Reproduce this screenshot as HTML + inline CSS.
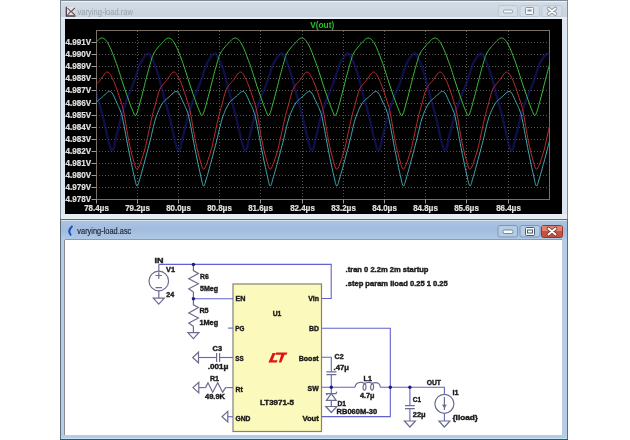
<!DOCTYPE html>
<html><head><meta charset="utf-8"><style>
html,body{margin:0;padding:0;width:630px;height:440px;overflow:hidden;background:#fff;font-family:"Liberation Sans",sans-serif;}
</style></head><body>
<svg width="630" height="440" viewBox="0 0 630 440" style="position:absolute;left:0;top:0;will-change:transform">
<defs>
<linearGradient id="tb1" x1="0" y1="0" x2="0" y2="1"><stop offset="0" stop-color="#d3dce5"/><stop offset="1" stop-color="#c9d3dd"/></linearGradient>
<linearGradient id="tb2" x1="0" y1="0" x2="0" y2="1"><stop offset="0" stop-color="#aac2e2"/><stop offset="0.5" stop-color="#a2bcde"/><stop offset="1" stop-color="#aec8e6"/></linearGradient>
<clipPath id="plotclip"><rect x="96.5" y="30.5" width="453" height="169.5"/></clipPath>
</defs>
<rect x="0" y="0" width="630" height="440" fill="#ffffff"/>
<rect x="60.5" y="0.5" width="507" height="219" fill="#d6dfe8" stroke="#7f8c98" stroke-width="1"/>
<rect x="61" y="1" width="506" height="1" fill="#eef3f7"/>
<rect x="61" y="2" width="506" height="15" fill="url(#tb1)"/>
<rect x="61" y="17" width="506" height="2" fill="#e6edf3"/>
<rect x="61" y="19" width="4" height="200" fill="#dde6ee"/>
<rect x="562" y="19" width="5" height="200" fill="#dde6ee"/>
<rect x="61" y="214" width="506" height="5" fill="#e6eef4"/>
<rect x="65" y="19" width="497" height="195" fill="#000000"/>
<text x="77.5" y="15" font-family="Liberation Sans" font-size="8.6" fill="#98a2ac" textLength="55.5" lengthAdjust="spacingAndGlyphs">varying-load.raw</text>
<rect x="65.5" y="7" width="9.5" height="9" fill="#e8dde4"/>
<g fill="none" stroke="#4a4048" stroke-width="1.3"><path d="M66.3 6.8 V16 H75.5"/></g>
<g fill="none" stroke="#5a5058" stroke-width="1.1"><path d="M67.5 8 L71 11.8 L74.8 8 M67.5 15 L71 11.2 L74.8 15"/></g>
<rect x="498.5" y="5.5" width="19" height="11" rx="2" fill="#d4dee8" stroke="#bcc8d4" stroke-width="1"/><rect x="503.5" y="10" width="9" height="3" rx="1" fill="#f4f6f8" stroke="#8a949c" stroke-width="0.8"/>
<rect x="520.0" y="5.5" width="19.5" height="11" rx="2" fill="#d4dee8" stroke="#bcc8d4" stroke-width="1"/><rect x="525.5" y="7.5" width="8" height="7" rx="1" fill="#f4f6f8" stroke="#8a949c" stroke-width="1"/><rect x="527.5" y="9.5" width="4" height="2" fill="#8a949c"/>
<rect x="542.0" y="5.5" width="20" height="11" rx="2" fill="#d4dee8" stroke="#bcc8d4" stroke-width="1"/><path d="M548.5 8.5 L555.5 14 M555.5 8.5 L548.5 14" stroke="#8a949c" stroke-width="3.6" stroke-linecap="round"/><path d="M548.5 8.5 L555.5 14 M555.5 8.5 L548.5 14" stroke="#f8fafc" stroke-width="2" stroke-linecap="round"/>
<path d="M96 42.5 H549 M96 54.5 H549 M96 66.5 H549 M96 78.5 H549 M96 90.5 H549 M96 103.5 H549 M96 115.5 H549 M96 127.5 H549 M96 139.5 H549 M96 151.5 H549 M96 163.5 H549 M96 175.5 H549 M96 187.5 H549 M137.5 31 V199 M178.5 31 V199 M219.5 31 V199 M260.5 31 V199 M302.5 31 V199 M343.5 31 V199 M384.5 31 V199 M425.5 31 V199 M466.5 31 V199 M508.5 31 V199" stroke="#555555" stroke-width="1" stroke-dasharray="1 2" fill="none"/>
<rect x="96.5" y="30.5" width="453" height="169" fill="none" stroke="#7a7068" stroke-width="1"/>
<path d="M91.5 42.5 H96.5 M91.5 54.5 H96.5 M91.5 66.5 H96.5 M91.5 78.5 H96.5 M91.5 90.5 H96.5 M91.5 103.5 H96.5 M91.5 115.5 H96.5 M91.5 127.5 H96.5 M91.5 139.5 H96.5 M91.5 151.5 H96.5 M91.5 163.5 H96.5 M91.5 175.5 H96.5 M91.5 187.5 H96.5 M91.5 199.5 H96.5 M96.5 199.5 V203.5 M137.5 199.5 V203.5 M178.5 199.5 V203.5 M219.5 199.5 V203.5 M260.5 199.5 V203.5 M302.5 199.5 V203.5 M343.5 199.5 V203.5 M384.5 199.5 V203.5 M425.5 199.5 V203.5 M466.5 199.5 V203.5 M508.5 199.5 V203.5" stroke="#9a9a9a" stroke-width="1" fill="none"/>
<text x="91.2" y="44.8" text-anchor="end" font-family="Liberation Sans" font-weight="bold" font-size="8.4" fill="#e0e0e0" stroke="#e0e0e0" stroke-width="0.2" textLength="25.6" lengthAdjust="spacingAndGlyphs">4.991V</text>
<text x="91.2" y="56.8" text-anchor="end" font-family="Liberation Sans" font-weight="bold" font-size="8.4" fill="#e0e0e0" stroke="#e0e0e0" stroke-width="0.2" textLength="25.6" lengthAdjust="spacingAndGlyphs">4.990V</text>
<text x="91.2" y="68.8" text-anchor="end" font-family="Liberation Sans" font-weight="bold" font-size="8.4" fill="#e0e0e0" stroke="#e0e0e0" stroke-width="0.2" textLength="25.6" lengthAdjust="spacingAndGlyphs">4.989V</text>
<text x="91.2" y="80.8" text-anchor="end" font-family="Liberation Sans" font-weight="bold" font-size="8.4" fill="#e0e0e0" stroke="#e0e0e0" stroke-width="0.2" textLength="25.6" lengthAdjust="spacingAndGlyphs">4.988V</text>
<text x="91.2" y="92.8" text-anchor="end" font-family="Liberation Sans" font-weight="bold" font-size="8.4" fill="#e0e0e0" stroke="#e0e0e0" stroke-width="0.2" textLength="25.6" lengthAdjust="spacingAndGlyphs">4.987V</text>
<text x="91.2" y="105.8" text-anchor="end" font-family="Liberation Sans" font-weight="bold" font-size="8.4" fill="#e0e0e0" stroke="#e0e0e0" stroke-width="0.2" textLength="25.6" lengthAdjust="spacingAndGlyphs">4.986V</text>
<text x="91.2" y="117.8" text-anchor="end" font-family="Liberation Sans" font-weight="bold" font-size="8.4" fill="#e0e0e0" stroke="#e0e0e0" stroke-width="0.2" textLength="25.6" lengthAdjust="spacingAndGlyphs">4.985V</text>
<text x="91.2" y="129.8" text-anchor="end" font-family="Liberation Sans" font-weight="bold" font-size="8.4" fill="#e0e0e0" stroke="#e0e0e0" stroke-width="0.2" textLength="25.6" lengthAdjust="spacingAndGlyphs">4.984V</text>
<text x="91.2" y="141.8" text-anchor="end" font-family="Liberation Sans" font-weight="bold" font-size="8.4" fill="#e0e0e0" stroke="#e0e0e0" stroke-width="0.2" textLength="25.6" lengthAdjust="spacingAndGlyphs">4.983V</text>
<text x="91.2" y="153.8" text-anchor="end" font-family="Liberation Sans" font-weight="bold" font-size="8.4" fill="#e0e0e0" stroke="#e0e0e0" stroke-width="0.2" textLength="25.6" lengthAdjust="spacingAndGlyphs">4.982V</text>
<text x="91.2" y="165.8" text-anchor="end" font-family="Liberation Sans" font-weight="bold" font-size="8.4" fill="#e0e0e0" stroke="#e0e0e0" stroke-width="0.2" textLength="25.6" lengthAdjust="spacingAndGlyphs">4.981V</text>
<text x="91.2" y="177.8" text-anchor="end" font-family="Liberation Sans" font-weight="bold" font-size="8.4" fill="#e0e0e0" stroke="#e0e0e0" stroke-width="0.2" textLength="25.6" lengthAdjust="spacingAndGlyphs">4.980V</text>
<text x="91.2" y="189.8" text-anchor="end" font-family="Liberation Sans" font-weight="bold" font-size="8.4" fill="#e0e0e0" stroke="#e0e0e0" stroke-width="0.2" textLength="25.6" lengthAdjust="spacingAndGlyphs">4.979V</text>
<text x="91.2" y="201.8" text-anchor="end" font-family="Liberation Sans" font-weight="bold" font-size="8.4" fill="#e0e0e0" stroke="#e0e0e0" stroke-width="0.2" textLength="25.6" lengthAdjust="spacingAndGlyphs">4.978V</text>
<text x="96.5" y="211.3" text-anchor="middle" font-family="Liberation Sans" font-weight="bold" font-size="8.2" fill="#e0e0e0" stroke="#e0e0e0" stroke-width="0.2" textLength="24.7" lengthAdjust="spacingAndGlyphs">78.4μs</text>
<text x="137.5" y="211.3" text-anchor="middle" font-family="Liberation Sans" font-weight="bold" font-size="8.2" fill="#e0e0e0" stroke="#e0e0e0" stroke-width="0.2" textLength="24.7" lengthAdjust="spacingAndGlyphs">79.2μs</text>
<text x="178.5" y="211.3" text-anchor="middle" font-family="Liberation Sans" font-weight="bold" font-size="8.2" fill="#e0e0e0" stroke="#e0e0e0" stroke-width="0.2" textLength="24.7" lengthAdjust="spacingAndGlyphs">80.0μs</text>
<text x="219.5" y="211.3" text-anchor="middle" font-family="Liberation Sans" font-weight="bold" font-size="8.2" fill="#e0e0e0" stroke="#e0e0e0" stroke-width="0.2" textLength="24.7" lengthAdjust="spacingAndGlyphs">80.8μs</text>
<text x="260.5" y="211.3" text-anchor="middle" font-family="Liberation Sans" font-weight="bold" font-size="8.2" fill="#e0e0e0" stroke="#e0e0e0" stroke-width="0.2" textLength="24.7" lengthAdjust="spacingAndGlyphs">81.6μs</text>
<text x="302.5" y="211.3" text-anchor="middle" font-family="Liberation Sans" font-weight="bold" font-size="8.2" fill="#e0e0e0" stroke="#e0e0e0" stroke-width="0.2" textLength="24.7" lengthAdjust="spacingAndGlyphs">82.4μs</text>
<text x="343.5" y="211.3" text-anchor="middle" font-family="Liberation Sans" font-weight="bold" font-size="8.2" fill="#e0e0e0" stroke="#e0e0e0" stroke-width="0.2" textLength="24.7" lengthAdjust="spacingAndGlyphs">83.2μs</text>
<text x="384.5" y="211.3" text-anchor="middle" font-family="Liberation Sans" font-weight="bold" font-size="8.2" fill="#e0e0e0" stroke="#e0e0e0" stroke-width="0.2" textLength="24.7" lengthAdjust="spacingAndGlyphs">84.0μs</text>
<text x="425.5" y="211.3" text-anchor="middle" font-family="Liberation Sans" font-weight="bold" font-size="8.2" fill="#e0e0e0" stroke="#e0e0e0" stroke-width="0.2" textLength="24.7" lengthAdjust="spacingAndGlyphs">84.8μs</text>
<text x="466.5" y="211.3" text-anchor="middle" font-family="Liberation Sans" font-weight="bold" font-size="8.2" fill="#e0e0e0" stroke="#e0e0e0" stroke-width="0.2" textLength="24.7" lengthAdjust="spacingAndGlyphs">85.6μs</text>
<text x="508.5" y="211.3" text-anchor="middle" font-family="Liberation Sans" font-weight="bold" font-size="8.2" fill="#e0e0e0" stroke="#e0e0e0" stroke-width="0.2" textLength="24.7" lengthAdjust="spacingAndGlyphs">86.4μs</text>
<text x="322.2" y="28.3" text-anchor="middle" font-family="Liberation Sans" font-weight="bold" font-size="9.5" fill="#22c422" textLength="24" lengthAdjust="spacingAndGlyphs">V(out)</text>
<g clip-path="url(#plotclip)" fill="none" stroke-linejoin="round">
<polyline points="94.9,87.4 95.8,90.8 96.6,94.1 97.4,97.0 98.1,99.5 98.7,101.7 99.3,103.6 99.8,105.4 100.3,107.4 100.9,109.5 101.6,112.0 102.4,115.0 103.4,118.9 104.5,123.7 105.7,129.0 106.9,134.5 108.2,139.7 109.4,144.3 110.5,147.9 111.4,150.0 112.2,150.6 113.0,150.1 113.6,148.6 114.2,146.4 114.7,143.8 115.3,141.1 115.8,138.4 116.4,136.0 117.0,133.8 117.6,131.4 118.3,128.9 118.9,126.2 119.5,123.6 120.1,121.0 120.7,118.4 121.4,116.0 122.1,113.6 122.9,111.2 123.6,108.8 124.4,106.5 125.2,104.2 126.0,102.0 126.7,99.9 127.4,98.0 128.1,96.2 128.8,94.5 129.4,93.0 130.1,91.5 130.7,90.1 131.3,88.7 131.9,87.4 132.4,86.0 132.9,84.7 133.4,83.4 133.8,82.2 134.3,81.0 134.7,79.8 135.1,78.6 135.5,77.3 136.0,76.0 136.5,74.6 136.9,73.1 137.4,71.5 137.8,69.9 138.3,68.4 138.8,66.8 139.4,65.4 140.0,64.0 140.7,62.7 141.4,61.3 142.2,60.0 143.0,58.8 143.8,57.6 144.6,56.5 145.3,55.7 146.0,55.0 146.6,54.5 147.1,54.0 147.5,53.6 147.9,53.4 148.4,53.4 148.8,53.7 149.4,54.2 150.0,55.0 150.7,56.2 151.5,57.6 152.4,59.4 153.3,61.4 154.2,63.6 155.2,65.9 156.1,68.4 157.0,71.0 157.9,73.8 158.8,77.0 159.7,80.4 160.6,83.9 161.5,87.4 162.4,90.8 163.2,94.1 164.0,97.0 164.7,99.5 165.3,101.7 165.8,103.6 166.4,105.4 166.9,107.4 167.5,109.5 168.2,112.0 169.0,115.0 170.0,118.9 171.1,123.7 172.3,129.0 173.5,134.5 174.7,139.7 175.9,144.3 177.0,147.9 178.0,150.0 178.8,150.6 179.5,150.1 180.2,148.6 180.8,146.4 181.3,143.8 181.8,141.1 182.4,138.4 183.0,136.0 183.6,133.8 184.2,131.4 184.8,128.9 185.4,126.2 186.1,123.6 186.7,121.0 187.3,118.4 188.0,116.0 188.7,113.6 189.5,111.2 190.2,108.8 191.0,106.5 191.8,104.2 192.5,102.0 193.3,99.9 194.0,98.0 194.7,96.2 195.4,94.5 196.0,93.0 196.7,91.5 197.3,90.1 197.9,88.7 198.4,87.4 199.0,86.0 199.5,84.7 200.0,83.4 200.4,82.2 200.9,81.0 201.3,79.8 201.7,78.6 202.1,77.3 202.6,76.0 203.0,74.6 203.5,73.1 204.0,71.5 204.4,69.9 204.9,68.4 205.4,66.8 206.0,65.4 206.6,64.0 207.2,62.7 208.0,61.3 208.8,60.0 209.6,58.8 210.4,57.6 211.2,56.5 211.9,55.7 212.6,55.0 213.2,54.5 213.7,54.0 214.1,53.6 214.5,53.4 214.9,53.4 215.4,53.7 216.0,54.2 216.6,55.0 217.3,56.2 218.1,57.6 219.0,59.4 219.9,61.4 220.8,63.6 221.8,65.9 222.7,68.4 223.6,71.0 224.5,73.8 225.4,77.0 226.3,80.4 227.2,83.9 228.1,87.4 229.0,90.8 229.8,94.1 230.6,97.0 231.3,99.5 231.9,101.7 232.4,103.6 233.0,105.4 233.5,107.4 234.1,109.5 234.8,112.0 235.6,115.0 236.5,118.9 237.6,123.7 238.8,129.0 240.1,134.5 241.3,139.7 242.5,144.3 243.6,147.9 244.6,150.0 245.4,150.6 246.1,150.1 246.7,148.6 247.3,146.4 247.9,143.8 248.4,141.1 249.0,138.4 249.6,136.0 250.2,133.8 250.8,131.4 251.4,128.9 252.0,126.2 252.6,123.6 253.3,121.0 253.9,118.4 254.6,116.0 255.3,113.6 256.0,111.2 256.8,108.8 257.6,106.5 258.4,104.2 259.1,102.0 259.9,99.9 260.6,98.0 261.3,96.2 261.9,94.5 262.6,93.0 263.2,91.5 263.9,90.1 264.5,88.7 265.0,87.4 265.6,86.0 266.1,84.7 266.6,83.4 267.0,82.2 267.4,81.0 267.8,79.8 268.3,78.6 268.7,77.3 269.2,76.0 269.6,74.6 270.1,73.1 270.5,71.5 271.0,69.9 271.5,68.4 272.0,66.8 272.6,65.4 273.2,64.0 273.8,62.7 274.6,61.3 275.4,60.0 276.2,58.8 277.0,57.6 277.8,56.5 278.5,55.7 279.2,55.0 279.7,54.5 280.2,54.0 280.7,53.6 281.1,53.4 281.5,53.4 282.0,53.7 282.5,54.2 283.2,55.0 283.9,56.2 284.7,57.6 285.6,59.4 286.5,61.4 287.4,63.6 288.3,65.9 289.3,68.4 290.2,71.0 291.0,73.8 292.0,77.0 292.9,80.4 293.8,83.9 294.7,87.4 295.6,90.8 296.4,94.1 297.2,97.0 297.9,99.5 298.5,101.7 299.0,103.6 299.5,105.4 300.1,107.4 300.7,109.5 301.4,112.0 302.2,115.0 303.1,118.9 304.2,123.7 305.4,129.0 306.7,134.5 307.9,139.7 309.1,144.3 310.2,147.9 311.2,150.0 312.0,150.6 312.7,150.1 313.3,148.6 313.9,146.4 314.5,143.8 315.0,141.1 315.6,138.4 316.2,136.0 316.8,133.8 317.4,131.4 318.0,128.9 318.6,126.2 319.2,123.6 319.8,121.0 320.5,118.4 321.2,116.0 321.9,113.6 322.6,111.2 323.4,108.8 324.2,106.5 324.9,104.2 325.7,102.0 326.5,99.9 327.2,98.0 327.8,96.2 328.5,94.5 329.2,93.0 329.8,91.5 330.4,90.1 331.0,88.7 331.6,87.4 332.2,86.0 332.7,84.7 333.1,83.4 333.6,82.2 334.0,81.0 334.4,79.8 334.8,78.6 335.3,77.3 335.7,76.0 336.2,74.6 336.7,73.1 337.1,71.5 337.6,69.9 338.1,68.4 338.6,66.8 339.1,65.4 339.7,64.0 340.4,62.7 341.1,61.3 341.9,60.0 342.7,58.8 343.5,57.6 344.3,56.5 345.1,55.7 345.7,55.0 346.3,54.5 346.8,54.0 347.3,53.6 347.7,53.4 348.1,53.4 348.6,53.7 349.1,54.2 349.7,55.0 350.5,56.2 351.3,57.6 352.1,59.4 353.1,61.4 354.0,63.6 354.9,65.9 355.8,68.4 356.7,71.0 357.6,73.8 358.5,77.0 359.5,80.4 360.4,83.9 361.3,87.4 362.1,90.8 363.0,94.1 363.7,97.0 364.4,99.5 365.0,101.7 365.6,103.6 366.1,105.4 366.7,107.4 367.3,109.5 367.9,112.0 368.7,115.0 369.7,118.9 370.8,123.7 372.0,129.0 373.2,134.5 374.5,139.7 375.7,144.3 376.8,147.9 377.7,150.0 378.6,150.6 379.3,150.1 379.9,148.6 380.5,146.4 381.0,143.8 381.6,141.1 382.1,138.4 382.7,136.0 383.4,133.8 384.0,131.4 384.6,128.9 385.2,126.2 385.8,123.6 386.4,121.0 387.1,118.4 387.7,116.0 388.4,113.6 389.2,111.2 390.0,108.8 390.7,106.5 391.5,104.2 392.3,102.0 393.0,99.9 393.7,98.0 394.4,96.2 395.1,94.5 395.8,93.0 396.4,91.5 397.0,90.1 397.6,88.7 398.2,87.4 398.7,86.0 399.3,84.7 399.7,83.4 400.2,82.2 400.6,81.0 401.0,79.8 401.4,78.6 401.9,77.3 402.3,76.0 402.8,74.6 403.2,73.1 403.7,71.5 404.2,69.9 404.7,68.4 405.2,66.8 405.7,65.4 406.3,64.0 407.0,62.7 407.7,61.3 408.5,60.0 409.3,58.8 410.1,57.6 410.9,56.5 411.7,55.7 412.3,55.0 412.9,54.5 413.4,54.0 413.8,53.6 414.3,53.4 414.7,53.4 415.2,53.7 415.7,54.2 416.3,55.0 417.1,56.2 417.9,57.6 418.7,59.4 419.6,61.4 420.6,63.6 421.5,65.9 422.4,68.4 423.3,71.0 424.2,73.8 425.1,77.0 426.0,80.4 426.9,83.9 427.8,87.4 428.7,90.8 429.5,94.1 430.3,97.0 431.0,99.5 431.6,101.7 432.2,103.6 432.7,105.4 433.2,107.4 433.8,109.5 434.5,112.0 435.3,115.0 436.3,118.9 437.4,123.7 438.6,129.0 439.8,134.5 441.1,139.7 442.3,144.3 443.4,147.9 444.3,150.0 445.1,150.6 445.9,150.1 446.5,148.6 447.1,146.4 447.6,143.8 448.2,141.1 448.7,138.4 449.3,136.0 449.9,133.8 450.5,131.4 451.2,128.9 451.8,126.2 452.4,123.6 453.0,121.0 453.6,118.4 454.3,116.0 455.0,113.6 455.8,111.2 456.5,108.8 457.3,106.5 458.1,104.2 458.9,102.0 459.6,99.9 460.3,98.0 461.0,96.2 461.7,94.5 462.3,93.0 463.0,91.5 463.6,90.1 464.2,88.7 464.8,87.4 465.3,86.0 465.8,84.7 466.3,83.4 466.7,82.2 467.2,81.0 467.6,79.8 468.0,78.6 468.4,77.3 468.9,76.0 469.4,74.6 469.8,73.1 470.3,71.5 470.7,69.9 471.2,68.4 471.7,66.8 472.3,65.4 472.9,64.0 473.6,62.7 474.3,61.3 475.1,60.0 475.9,58.8 476.7,57.6 477.5,56.5 478.2,55.7 478.9,55.0 479.5,54.5 480.0,54.0 480.4,53.6 480.8,53.4 481.3,53.4 481.7,53.7 482.3,54.2 482.9,55.0 483.6,56.2 484.4,57.6 485.3,59.4 486.2,61.4 487.1,63.6 488.1,65.9 489.0,68.4 489.9,71.0 490.8,73.8 491.7,77.0 492.6,80.4 493.5,83.9 494.4,87.4 495.3,90.8 496.1,94.1 496.9,97.0 497.6,99.5 498.2,101.7 498.7,103.6 499.3,105.4 499.8,107.4 500.4,109.5 501.1,112.0 501.9,115.0 502.9,118.9 504.0,123.7 505.2,129.0 506.4,134.5 507.6,139.7 508.8,144.3 509.9,147.9 510.9,150.0 511.7,150.6 512.4,150.1 513.1,148.6 513.6,146.4 514.2,143.8 514.7,141.1 515.3,138.4 515.9,136.0 516.5,133.8 517.1,131.4 517.7,128.9 518.3,126.2 519.0,123.6 519.6,121.0 520.2,118.4 520.9,116.0 521.6,113.6 522.4,111.2 523.1,108.8 523.9,106.5 524.7,104.2 525.4,102.0 526.2,99.9 526.9,98.0 527.6,96.2 528.3,94.5 528.9,93.0 529.6,91.5 530.2,90.1 530.8,88.7 531.3,87.4 531.9,86.0 532.4,84.7 532.9,83.4 533.3,82.2 533.8,81.0 534.2,79.8 534.6,78.6 535.0,77.3 535.5,76.0 535.9,74.6 536.4,73.1 536.9,71.5 537.3,69.9 537.8,68.4 538.3,66.8 538.9,65.4 539.5,64.0 540.1,62.7 540.9,61.3 541.7,60.0 542.5,58.8 543.3,57.6 544.1,56.5 544.8,55.7 545.5,55.0 546.1,54.5 546.6,54.0 547.0,53.6 547.4,53.4 547.8,53.4 548.3,53.7 548.9,54.2 549.5,55.0 550.2,56.2 551.0,57.6" stroke="#1c1c84" stroke-width="2.4" stroke-opacity="0.55"/>
<polyline points="94.6,105.5 95.4,104.0 96.3,102.7 97.1,101.7 98.0,100.7 98.8,99.9 99.7,99.2 100.6,98.5 101.5,97.7 102.4,97.0 103.4,96.1 104.4,95.1 105.4,94.1 106.5,93.2 107.5,92.3 108.5,91.7 109.5,91.4 110.4,91.5 111.3,92.1 112.1,93.0 112.9,94.3 113.7,95.8 114.4,97.5 115.1,99.1 115.8,100.6 116.4,102.0 117.0,103.2 117.6,104.4 118.1,105.5 118.6,106.6 119.1,107.7 119.6,108.8 120.0,109.9 120.4,111.0 120.8,112.0 121.1,112.7 121.3,113.4 121.6,114.1 121.8,115.0 122.1,116.2 122.5,117.8 122.9,120.0 123.5,122.9 124.2,126.4 124.9,130.3 125.7,134.6 126.5,138.9 127.3,143.2 128.1,147.3 128.8,151.0 129.5,154.4 130.2,157.8 130.9,161.1 131.5,164.2 132.2,167.3 132.8,170.1 133.4,172.7 133.9,175.0 134.4,177.1 134.8,179.1 135.2,180.9 135.6,182.5 135.9,183.8 136.3,184.9 136.6,185.6 137.0,186.0 137.4,186.0 137.7,185.5 138.1,184.7 138.4,183.7 138.8,182.4 139.1,181.0 139.6,179.5 140.0,178.0 140.5,176.4 141.0,174.7 141.5,172.8 142.1,170.9 142.7,168.8 143.2,166.6 143.9,164.3 144.5,162.0 145.2,159.5 145.9,156.9 146.6,154.1 147.4,151.3 148.1,148.4 148.9,145.6 149.6,142.7 150.3,140.0 151.0,137.3 151.6,134.5 152.2,131.8 152.9,129.1 153.5,126.4 154.1,123.8 154.8,121.3 155.5,119.0 156.2,116.8 157.0,114.6 157.8,112.6 158.6,110.6 159.5,108.8 160.3,107.0 161.2,105.5 162.0,104.0 162.8,102.7 163.7,101.7 164.5,100.7 165.4,99.9 166.3,99.2 167.2,98.5 168.1,97.7 169.0,97.0 170.0,96.1 171.0,95.1 172.0,94.1 173.1,93.2 174.1,92.3 175.1,91.7 176.1,91.4 177.0,91.5 177.9,92.1 178.7,93.0 179.5,94.3 180.2,95.8 181.0,97.5 181.7,99.1 182.4,100.6 183.0,102.0 183.6,103.2 184.2,104.4 184.7,105.5 185.2,106.6 185.7,107.7 186.2,108.8 186.6,109.9 187.0,111.0 187.4,112.0 187.7,112.7 187.9,113.4 188.1,114.1 188.4,115.0 188.7,116.2 189.0,117.8 189.5,120.0 190.1,122.9 190.8,126.4 191.5,130.3 192.3,134.6 193.1,138.9 193.9,143.2 194.7,147.3 195.4,151.0 196.1,154.4 196.8,157.8 197.5,161.1 198.1,164.2 198.8,167.3 199.4,170.1 200.0,172.7 200.5,175.0 201.0,177.1 201.4,179.1 201.8,180.9 202.2,182.5 202.5,183.8 202.9,184.9 203.2,185.6 203.6,186.0 203.9,186.0 204.3,185.5 204.6,184.7 205.0,183.7 205.3,182.4 205.7,181.0 206.1,179.5 206.6,178.0 207.1,176.4 207.6,174.7 208.1,172.8 208.7,170.9 209.2,168.8 209.8,166.6 210.4,164.3 211.1,162.0 211.7,159.5 212.5,156.9 213.2,154.1 213.9,151.3 214.7,148.4 215.4,145.6 216.2,142.7 216.9,140.0 217.5,137.3 218.2,134.5 218.8,131.8 219.4,129.1 220.1,126.4 220.7,123.8 221.4,121.3 222.1,119.0 222.8,116.8 223.6,114.6 224.4,112.6 225.2,110.6 226.0,108.8 226.9,107.0 227.7,105.5 228.6,104.0 229.4,102.7 230.3,101.7 231.1,100.7 232.0,99.9 232.9,99.2 233.7,98.5 234.7,97.7 235.6,97.0 236.5,96.1 237.6,95.1 238.6,94.1 239.6,93.2 240.7,92.3 241.7,91.7 242.7,91.4 243.6,91.5 244.4,92.1 245.3,93.0 246.1,94.3 246.8,95.8 247.6,97.5 248.3,99.1 248.9,100.6 249.6,102.0 250.2,103.2 250.8,104.4 251.3,105.5 251.8,106.6 252.3,107.7 252.7,108.8 253.2,109.9 253.6,111.0 253.9,112.0 254.2,112.7 254.5,113.4 254.7,114.1 255.0,115.0 255.3,116.2 255.6,117.8 256.1,120.0 256.7,122.9 257.3,126.4 258.1,130.3 258.9,134.6 259.7,138.9 260.5,143.2 261.3,147.3 262.0,151.0 262.7,154.4 263.4,157.8 264.0,161.1 264.7,164.2 265.4,167.3 266.0,170.1 266.5,172.7 267.1,175.0 267.6,177.1 268.0,179.1 268.4,180.9 268.8,182.5 269.1,183.8 269.4,184.9 269.8,185.6 270.2,186.0 270.5,186.0 270.9,185.5 271.2,184.7 271.6,183.7 271.9,182.4 272.3,181.0 272.7,179.5 273.2,178.0 273.6,176.4 274.1,174.7 274.7,172.8 275.2,170.9 275.8,168.8 276.4,166.6 277.0,164.3 277.7,162.0 278.3,159.5 279.0,156.9 279.8,154.1 280.5,151.3 281.3,148.4 282.0,145.6 282.8,142.7 283.5,140.0 284.1,137.3 284.8,134.5 285.4,131.8 286.0,129.1 286.6,126.4 287.3,123.8 288.0,121.3 288.7,119.0 289.4,116.8 290.2,114.6 291.0,112.6 291.8,110.6 292.6,108.8 293.5,107.0 294.3,105.5 295.2,104.0 296.0,102.7 296.9,101.7 297.7,100.7 298.6,99.9 299.4,99.2 300.3,98.5 301.2,97.7 302.2,97.0 303.1,96.1 304.1,95.1 305.2,94.1 306.2,93.2 307.3,92.3 308.3,91.7 309.2,91.4 310.2,91.5 311.0,92.1 311.8,93.0 312.6,94.3 313.4,95.8 314.1,97.5 314.8,99.1 315.5,100.6 316.2,102.0 316.8,103.2 317.3,104.4 317.9,105.5 318.4,106.6 318.9,107.7 319.3,108.8 319.7,109.9 320.2,111.0 320.5,112.0 320.8,112.7 321.1,113.4 321.3,114.1 321.5,115.0 321.8,116.2 322.2,117.8 322.7,120.0 323.2,122.9 323.9,126.4 324.7,130.3 325.4,134.6 326.3,138.9 327.1,143.2 327.8,147.3 328.6,151.0 329.2,154.4 329.9,157.8 330.6,161.1 331.3,164.2 331.9,167.3 332.5,170.1 333.1,172.7 333.7,175.0 334.1,177.1 334.6,179.1 335.0,180.9 335.3,182.5 335.7,183.8 336.0,184.9 336.4,185.6 336.7,186.0 337.1,186.0 337.5,185.5 337.8,184.7 338.2,183.7 338.5,182.4 338.9,181.0 339.3,179.5 339.7,178.0 340.2,176.4 340.7,174.7 341.3,172.8 341.8,170.9 342.4,168.8 343.0,166.6 343.6,164.3 344.2,162.0 344.9,159.5 345.6,156.9 346.3,154.1 347.1,151.3 347.9,148.4 348.6,145.6 349.3,142.7 350.0,140.0 350.7,137.3 351.4,134.5 352.0,131.8 352.6,129.1 353.2,126.4 353.9,123.8 354.5,121.3 355.2,119.0 356.0,116.8 356.8,114.6 357.6,112.6 358.4,110.6 359.2,108.8 360.0,107.0 360.9,105.5 361.7,104.0 362.6,102.7 363.4,101.7 364.3,100.7 365.1,99.9 366.0,99.2 366.9,98.5 367.8,97.7 368.7,97.0 369.7,96.1 370.7,95.1 371.8,94.1 372.8,93.2 373.8,92.3 374.9,91.7 375.8,91.4 376.7,91.5 377.6,92.1 378.4,93.0 379.2,94.3 380.0,95.8 380.7,97.5 381.4,99.1 382.1,100.6 382.7,102.0 383.3,103.2 383.9,104.4 384.5,105.5 385.0,106.6 385.4,107.7 385.9,108.8 386.3,109.9 386.7,111.0 387.1,112.0 387.4,112.7 387.6,113.4 387.9,114.1 388.1,115.0 388.4,116.2 388.8,117.8 389.2,120.0 389.8,122.9 390.5,126.4 391.2,130.3 392.0,134.6 392.8,138.9 393.6,143.2 394.4,147.3 395.1,151.0 395.8,154.4 396.5,157.8 397.2,161.1 397.9,164.2 398.5,167.3 399.1,170.1 399.7,172.7 400.2,175.0 400.7,177.1 401.2,179.1 401.5,180.9 401.9,182.5 402.3,183.8 402.6,184.9 403.0,185.6 403.3,186.0 403.7,186.0 404.0,185.5 404.4,184.7 404.7,183.7 405.1,182.4 405.5,181.0 405.9,179.5 406.3,178.0 406.8,176.4 407.3,174.7 407.8,172.8 408.4,170.9 409.0,168.8 409.6,166.6 410.2,164.3 410.8,162.0 411.5,159.5 412.2,156.9 412.9,154.1 413.7,151.3 414.4,148.4 415.2,145.6 415.9,142.7 416.6,140.0 417.3,137.3 417.9,134.5 418.6,131.8 419.2,129.1 419.8,126.4 420.4,123.8 421.1,121.3 421.8,119.0 422.6,116.8 423.3,114.6 424.1,112.6 425.0,110.6 425.8,108.8 426.6,107.0 427.5,105.5 428.3,104.0 429.2,102.7 430.0,101.7 430.9,100.7 431.7,99.9 432.6,99.2 433.5,98.5 434.4,97.7 435.3,97.0 436.3,96.1 437.3,95.1 438.3,94.1 439.4,93.2 440.4,92.3 441.4,91.7 442.4,91.4 443.3,91.5 444.2,92.1 445.0,93.0 445.8,94.3 446.6,95.8 447.3,97.5 448.0,99.1 448.7,100.6 449.3,102.0 449.9,103.2 450.5,104.4 451.0,105.5 451.5,106.6 452.0,107.7 452.5,108.8 452.9,109.9 453.3,111.0 453.7,112.0 454.0,112.7 454.2,113.4 454.5,114.1 454.7,115.0 455.0,116.2 455.4,117.8 455.8,120.0 456.4,122.9 457.1,126.4 457.8,130.3 458.6,134.6 459.4,138.9 460.2,143.2 461.0,147.3 461.7,151.0 462.4,154.4 463.1,157.8 463.8,161.1 464.4,164.2 465.1,167.3 465.7,170.1 466.3,172.7 466.8,175.0 467.3,177.1 467.7,179.1 468.1,180.9 468.5,182.5 468.8,183.8 469.2,184.9 469.5,185.6 469.9,186.0 470.3,186.0 470.6,185.5 471.0,184.7 471.3,183.7 471.7,182.4 472.0,181.0 472.5,179.5 472.9,178.0 473.4,176.4 473.9,174.7 474.4,172.8 475.0,170.9 475.6,168.8 476.1,166.6 476.8,164.3 477.4,162.0 478.1,159.5 478.8,156.9 479.5,154.1 480.3,151.3 481.0,148.4 481.8,145.6 482.5,142.7 483.2,140.0 483.9,137.3 484.5,134.5 485.1,131.8 485.8,129.1 486.4,126.4 487.0,123.8 487.7,121.3 488.4,119.0 489.1,116.8 489.9,114.6 490.7,112.6 491.5,110.6 492.4,108.8 493.2,107.0 494.1,105.5 494.9,104.0 495.7,102.7 496.6,101.7 497.4,100.7 498.3,99.9 499.2,99.2 500.1,98.5 501.0,97.7 501.9,97.0 502.9,96.1 503.9,95.1 504.9,94.1 506.0,93.2 507.0,92.3 508.0,91.7 509.0,91.4 509.9,91.5 510.8,92.1 511.6,93.0 512.4,94.3 513.1,95.8 513.9,97.5 514.6,99.1 515.3,100.6 515.9,102.0 516.5,103.2 517.1,104.4 517.6,105.5 518.1,106.6 518.6,107.7 519.1,108.8 519.5,109.9 519.9,111.0 520.3,112.0 520.6,112.7 520.8,113.4 521.0,114.1 521.3,115.0 521.6,116.2 521.9,117.8 522.4,120.0 523.0,122.9 523.7,126.4 524.4,130.3 525.2,134.6 526.0,138.9 526.8,143.2 527.6,147.3 528.3,151.0 529.0,154.4 529.7,157.8 530.4,161.1 531.0,164.2 531.7,167.3 532.3,170.1 532.9,172.7 533.4,175.0 533.9,177.1 534.3,179.1 534.7,180.9 535.1,182.5 535.4,183.8 535.8,184.9 536.1,185.6 536.5,186.0 536.8,186.0 537.2,185.5 537.5,184.7 537.9,183.7 538.2,182.4 538.6,181.0 539.0,179.5 539.5,178.0 540.0,176.4 540.5,174.7 541.0,172.8 541.6,170.9 542.1,168.8 542.7,166.6 543.3,164.3 544.0,162.0 544.6,159.5 545.4,156.9 546.1,154.1 546.8,151.3 547.6,148.4 548.3,145.6 549.1,142.7 549.8,140.0 550.4,137.3 551.1,134.5" stroke="#40a8b0" stroke-width="1"/>
<polyline points="94.9,86.4 95.7,85.3 96.5,84.3 97.3,83.4 98.2,82.5 99.1,81.5 99.9,80.5 100.8,79.3 101.7,78.0 102.6,76.6 103.6,75.2 104.5,73.9 105.5,72.9 106.4,72.2 107.2,72.0 108.0,72.2 108.8,72.7 109.6,73.5 110.3,74.5 111.1,75.8 111.8,77.2 112.6,78.8 113.4,80.5 114.3,82.5 115.2,84.8 116.1,87.3 117.1,90.0 118.0,92.7 118.9,95.3 119.7,97.8 120.4,100.0 121.0,101.8 121.5,103.4 121.9,104.7 122.3,106.0 122.7,107.3 123.0,108.8 123.4,110.7 123.9,113.0 124.5,115.8 125.1,119.2 125.7,122.8 126.3,126.6 126.9,130.5 127.6,134.3 128.2,137.8 128.8,141.0 129.4,143.9 130.0,146.6 130.6,149.2 131.2,151.7 131.7,154.0 132.3,156.2 132.9,158.2 133.4,160.0 133.9,161.8 134.4,163.6 134.9,165.2 135.3,166.8 135.8,168.0 136.3,168.8 136.9,169.2 137.5,169.0 138.2,168.1 139.0,166.6 139.9,164.5 140.8,162.1 141.6,159.5 142.5,156.9 143.3,154.3 144.0,152.0 144.6,149.9 145.2,147.8 145.7,145.7 146.2,143.6 146.6,141.4 147.1,139.3 147.5,137.2 148.0,135.0 148.5,132.8 149.0,130.5 149.5,128.1 150.0,125.8 150.5,123.4 151.0,121.2 151.5,119.0 152.0,117.0 152.5,115.1 152.9,113.4 153.3,111.8 153.7,110.3 154.1,108.8 154.6,107.3 155.0,105.7 155.5,104.0 156.0,102.2 156.5,100.2 157.0,98.2 157.6,96.2 158.1,94.2 158.7,92.3 159.3,90.6 160.0,89.0 160.7,87.6 161.5,86.4 162.3,85.3 163.1,84.3 163.9,83.4 164.8,82.5 165.6,81.5 166.5,80.5 167.4,79.3 168.3,78.0 169.2,76.6 170.2,75.2 171.1,73.9 172.0,72.9 172.9,72.2 173.8,72.0 174.6,72.2 175.4,72.7 176.2,73.5 176.9,74.5 177.7,75.8 178.4,77.2 179.2,78.8 180.0,80.5 180.9,82.5 181.8,84.8 182.7,87.3 183.7,90.0 184.6,92.7 185.5,95.3 186.3,97.8 187.0,100.0 187.6,101.8 188.1,103.4 188.5,104.7 188.9,106.0 189.2,107.3 189.6,108.8 190.0,110.7 190.5,113.0 191.0,115.8 191.6,119.2 192.2,122.8 192.9,126.6 193.5,130.5 194.2,134.3 194.8,137.8 195.4,141.0 196.0,143.9 196.6,146.6 197.2,149.2 197.8,151.7 198.3,154.0 198.9,156.2 199.5,158.2 200.0,160.0 200.5,161.8 201.0,163.6 201.5,165.2 201.9,166.8 202.4,168.0 202.9,168.8 203.5,169.2 204.1,169.0 204.8,168.1 205.6,166.6 206.5,164.5 207.3,162.1 208.2,159.5 209.1,156.9 209.9,154.3 210.6,152.0 211.2,149.9 211.8,147.8 212.3,145.7 212.7,143.6 213.2,141.4 213.6,139.3 214.1,137.2 214.6,135.0 215.1,132.8 215.6,130.5 216.1,128.1 216.6,125.8 217.1,123.4 217.6,121.2 218.1,119.0 218.6,117.0 219.0,115.1 219.5,113.4 219.9,111.8 220.3,110.3 220.7,108.8 221.1,107.3 221.6,105.7 222.1,104.0 222.6,102.2 223.1,100.2 223.6,98.2 224.1,96.2 224.7,94.2 225.3,92.3 225.9,90.6 226.6,89.0 227.3,87.6 228.0,86.4 228.8,85.3 229.7,84.3 230.5,83.4 231.4,82.5 232.2,81.5 233.1,80.5 234.0,79.3 234.9,78.0 235.8,76.6 236.7,75.2 237.7,73.9 238.6,72.9 239.5,72.2 240.4,72.0 241.2,72.2 242.0,72.7 242.8,73.5 243.5,74.5 244.2,75.8 245.0,77.2 245.8,78.8 246.6,80.5 247.4,82.5 248.4,84.8 249.3,87.3 250.2,90.0 251.2,92.7 252.1,95.3 252.9,97.8 253.6,100.0 254.2,101.8 254.7,103.4 255.1,104.7 255.5,106.0 255.8,107.3 256.2,108.8 256.6,110.7 257.1,113.0 257.6,115.8 258.2,119.2 258.8,122.8 259.5,126.6 260.1,130.5 260.7,134.3 261.4,137.8 262.0,141.0 262.6,143.9 263.2,146.6 263.7,149.2 264.3,151.7 264.9,154.0 265.5,156.2 266.0,158.2 266.6,160.0 267.1,161.8 267.6,163.6 268.0,165.2 268.5,166.8 269.0,168.0 269.5,168.8 270.0,169.2 270.7,169.0 271.4,168.1 272.2,166.6 273.0,164.5 273.9,162.1 274.8,159.5 275.7,156.9 276.5,154.3 277.2,152.0 277.8,149.9 278.3,147.8 278.8,145.7 279.3,143.6 279.8,141.4 280.2,139.3 280.7,137.2 281.2,135.0 281.7,132.8 282.2,130.5 282.7,128.1 283.2,125.8 283.7,123.4 284.2,121.2 284.7,119.0 285.2,117.0 285.6,115.1 286.0,113.4 286.5,111.8 286.9,110.3 287.3,108.8 287.7,107.3 288.2,105.7 288.7,104.0 289.2,102.2 289.7,100.2 290.2,98.2 290.7,96.2 291.3,94.2 291.9,92.3 292.5,90.6 293.2,89.0 293.9,87.6 294.6,86.4 295.4,85.3 296.2,84.3 297.1,83.4 297.9,82.5 298.8,81.5 299.7,80.5 300.5,79.3 301.5,78.0 302.4,76.6 303.3,75.2 304.3,73.9 305.2,72.9 306.1,72.2 307.0,72.0 307.8,72.2 308.6,72.7 309.3,73.5 310.1,74.5 310.8,75.8 311.6,77.2 312.4,78.8 313.2,80.5 314.0,82.5 314.9,84.8 315.9,87.3 316.8,90.0 317.8,92.7 318.6,95.3 319.4,97.8 320.2,100.0 320.8,101.8 321.2,103.4 321.7,104.7 322.0,106.0 322.4,107.3 322.8,108.8 323.2,110.7 323.7,113.0 324.2,115.8 324.8,119.2 325.4,122.8 326.0,126.6 326.7,130.5 327.3,134.3 328.0,137.8 328.6,141.0 329.2,143.9 329.7,146.6 330.3,149.2 330.9,151.7 331.5,154.0 332.1,156.2 332.6,158.2 333.2,160.0 333.7,161.8 334.2,163.6 334.6,165.2 335.1,166.8 335.6,168.0 336.1,168.8 336.6,169.2 337.2,169.0 338.0,168.1 338.8,166.6 339.6,164.5 340.5,162.1 341.4,159.5 342.2,156.9 343.0,154.3 343.7,152.0 344.4,149.9 344.9,147.8 345.4,145.7 345.9,143.6 346.3,141.4 346.8,139.3 347.3,137.2 347.7,135.0 348.2,132.8 348.8,130.5 349.3,128.1 349.8,125.8 350.3,123.4 350.8,121.2 351.3,119.0 351.7,117.0 352.2,115.1 352.6,113.4 353.0,111.8 353.5,110.3 353.9,108.8 354.3,107.3 354.8,105.7 355.2,104.0 355.7,102.2 356.2,100.2 356.8,98.2 357.3,96.2 357.9,94.2 358.5,92.3 359.1,90.6 359.7,89.0 360.5,87.6 361.2,86.4 362.0,85.3 362.8,84.3 363.7,83.4 364.5,82.5 365.4,81.5 366.2,80.5 367.1,79.3 368.0,78.0 369.0,76.6 369.9,75.2 370.8,73.9 371.8,72.9 372.7,72.2 373.5,72.0 374.4,72.2 375.1,72.7 375.9,73.5 376.7,74.5 377.4,75.8 378.2,77.2 378.9,78.8 379.7,80.5 380.6,82.5 381.5,84.8 382.5,87.3 383.4,90.0 384.3,92.7 385.2,95.3 386.0,97.8 386.7,100.0 387.3,101.8 387.8,103.4 388.2,104.7 388.6,106.0 389.0,107.3 389.3,108.8 389.8,110.7 390.2,113.0 390.8,115.8 391.4,119.2 392.0,122.8 392.6,126.6 393.3,130.5 393.9,134.3 394.5,137.8 395.1,141.0 395.7,143.9 396.3,146.6 396.9,149.2 397.5,151.7 398.1,154.0 398.6,156.2 399.2,158.2 399.7,160.0 400.3,161.8 400.7,163.6 401.2,165.2 401.7,166.8 402.1,168.0 402.6,168.8 403.2,169.2 403.8,169.0 404.5,168.1 405.3,166.6 406.2,164.5 407.1,162.1 408.0,159.5 408.8,156.9 409.6,154.3 410.3,152.0 410.9,149.9 411.5,147.8 412.0,145.7 412.5,143.6 412.9,141.4 413.4,139.3 413.8,137.2 414.3,135.0 414.8,132.8 415.3,130.5 415.8,128.1 416.4,125.8 416.9,123.4 417.4,121.2 417.8,119.0 418.3,117.0 418.8,115.1 419.2,113.4 419.6,111.8 420.0,110.3 420.5,108.8 420.9,107.3 421.3,105.7 421.8,104.0 422.3,102.2 422.8,100.2 423.3,98.2 423.9,96.2 424.4,94.2 425.0,92.3 425.7,90.6 426.3,89.0 427.0,87.6 427.8,86.4 428.6,85.3 429.4,84.3 430.2,83.4 431.1,82.5 432.0,81.5 432.8,80.5 433.7,79.3 434.6,78.0 435.5,76.6 436.5,75.2 437.4,73.9 438.4,72.9 439.3,72.2 440.1,72.0 440.9,72.2 441.7,72.7 442.5,73.5 443.2,74.5 444.0,75.8 444.7,77.2 445.5,78.8 446.3,80.5 447.2,82.5 448.1,84.8 449.0,87.3 450.0,90.0 450.9,92.7 451.8,95.3 452.6,97.8 453.3,100.0 453.9,101.8 454.4,103.4 454.8,104.7 455.2,106.0 455.6,107.3 455.9,108.8 456.3,110.7 456.8,113.0 457.4,115.8 458.0,119.2 458.6,122.8 459.2,126.6 459.8,130.5 460.5,134.3 461.1,137.8 461.7,141.0 462.3,143.9 462.9,146.6 463.5,149.2 464.1,151.7 464.6,154.0 465.2,156.2 465.8,158.2 466.3,160.0 466.8,161.8 467.3,163.6 467.8,165.2 468.2,166.8 468.7,168.0 469.2,168.8 469.8,169.2 470.4,169.0 471.1,168.1 471.9,166.6 472.8,164.5 473.7,162.1 474.5,159.5 475.4,156.9 476.2,154.3 476.9,152.0 477.5,149.9 478.1,147.8 478.6,145.7 479.1,143.6 479.5,141.4 480.0,139.3 480.4,137.2 480.9,135.0 481.4,132.8 481.9,130.5 482.4,128.1 482.9,125.8 483.4,123.4 483.9,121.2 484.4,119.0 484.9,117.0 485.4,115.1 485.8,113.4 486.2,111.8 486.6,110.3 487.0,108.8 487.5,107.3 487.9,105.7 488.4,104.0 488.9,102.2 489.4,100.2 489.9,98.2 490.5,96.2 491.0,94.2 491.6,92.3 492.2,90.6 492.9,89.0 493.6,87.6 494.4,86.4 495.2,85.3 496.0,84.3 496.8,83.4 497.7,82.5 498.5,81.5 499.4,80.5 500.3,79.3 501.2,78.0 502.1,76.6 503.1,75.2 504.0,73.9 504.9,72.9 505.8,72.2 506.7,72.0 507.5,72.2 508.3,72.7 509.1,73.5 509.8,74.5 510.6,75.8 511.3,77.2 512.1,78.8 512.9,80.5 513.8,82.5 514.7,84.8 515.6,87.3 516.6,90.0 517.5,92.7 518.4,95.3 519.2,97.8 519.9,100.0 520.5,101.8 521.0,103.4 521.4,104.7 521.8,106.0 522.1,107.3 522.5,108.8 522.9,110.7 523.4,113.0 523.9,115.8 524.5,119.2 525.1,122.8 525.8,126.6 526.4,130.5 527.1,134.3 527.7,137.8 528.3,141.0 528.9,143.9 529.5,146.6 530.1,149.2 530.7,151.7 531.2,154.0 531.8,156.2 532.4,158.2 532.9,160.0 533.4,161.8 533.9,163.6 534.4,165.2 534.8,166.8 535.3,168.0 535.8,168.8 536.4,169.2 537.0,169.0 537.7,168.1 538.5,166.6 539.4,164.5 540.2,162.1 541.1,159.5 542.0,156.9 542.8,154.3 543.5,152.0 544.1,149.9 544.7,147.8 545.2,145.7 545.6,143.6 546.1,141.4 546.5,139.3 547.0,137.2 547.5,135.0 548.0,132.8 548.5,130.5 549.0,128.1 549.5,125.8 550.0,123.4 550.5,121.2 551.0,119.0 551.5,117.0" stroke="#c02e2e" stroke-width="1"/>
<polyline points="94.9,43.5 95.8,42.5 96.7,41.6 97.6,40.6 98.5,39.8 99.4,39.0 100.2,38.5 101.1,38.1 101.9,38.0 102.7,38.1 103.5,38.4 104.3,38.8 105.1,39.4 105.9,40.3 106.7,41.3 107.5,42.5 108.4,44.0 109.3,45.8 110.3,47.8 111.3,50.1 112.3,52.6 113.4,55.2 114.4,58.0 115.4,60.7 116.4,63.5 117.4,66.3 118.4,69.3 119.4,72.4 120.4,75.6 121.4,78.8 122.4,81.9 123.4,85.0 124.4,88.0 125.5,91.0 126.5,94.1 127.6,97.2 128.7,100.2 129.7,103.1 130.7,105.8 131.6,108.1 132.4,110.0 133.1,111.6 133.6,112.9 134.0,114.0 134.4,114.9 134.7,115.4 135.1,115.6 135.5,115.5 136.0,115.0 136.6,114.0 137.1,112.6 137.7,110.8 138.4,108.7 139.0,106.3 139.7,103.9 140.3,101.4 141.0,99.0 141.7,96.5 142.4,93.8 143.1,91.0 143.8,88.2 144.5,85.3 145.2,82.5 145.9,79.9 146.5,77.5 147.1,75.3 147.6,73.3 148.1,71.4 148.6,69.5 149.1,67.8 149.6,66.1 150.0,64.5 150.5,63.0 150.9,61.5 151.3,60.2 151.7,58.9 152.0,57.7 152.4,56.5 152.9,55.4 153.4,54.2 154.0,53.0 154.7,51.8 155.6,50.5 156.5,49.2 157.5,48.0 158.5,46.7 159.6,45.6 160.6,44.5 161.5,43.5 162.4,42.5 163.3,41.6 164.2,40.6 165.1,39.8 165.9,39.0 166.8,38.5 167.7,38.1 168.5,38.0 169.3,38.1 170.1,38.4 170.9,38.8 171.7,39.4 172.5,40.3 173.3,41.3 174.1,42.5 175.0,44.0 175.9,45.8 176.9,47.8 177.9,50.1 178.9,52.6 179.9,55.2 181.0,58.0 182.0,60.7 183.0,63.5 184.0,66.3 185.0,69.3 186.0,72.4 187.0,75.6 188.0,78.8 189.0,81.9 190.0,85.0 191.0,88.0 192.0,91.0 193.1,94.1 194.2,97.2 195.3,100.2 196.3,103.1 197.3,105.8 198.2,108.1 199.0,110.0 199.6,111.6 200.2,112.9 200.6,114.0 201.0,114.9 201.3,115.4 201.7,115.6 202.1,115.5 202.6,115.0 203.1,114.0 203.7,112.6 204.3,110.8 205.0,108.7 205.6,106.3 206.3,103.9 206.9,101.4 207.6,99.0 208.3,96.5 209.0,93.8 209.7,91.0 210.4,88.2 211.1,85.3 211.8,82.5 212.5,79.9 213.1,77.5 213.7,75.3 214.2,73.3 214.7,71.4 215.2,69.5 215.7,67.8 216.2,66.1 216.6,64.5 217.1,63.0 217.5,61.5 217.9,60.2 218.3,58.9 218.6,57.7 219.0,56.5 219.4,55.4 220.0,54.2 220.6,53.0 221.3,51.8 222.2,50.5 223.1,49.2 224.1,48.0 225.1,46.7 226.1,45.6 227.1,44.5 228.1,43.5 229.0,42.5 229.9,41.6 230.8,40.6 231.6,39.8 232.5,39.0 233.4,38.5 234.2,38.1 235.1,38.0 235.9,38.1 236.7,38.4 237.5,38.8 238.3,39.4 239.1,40.3 239.9,41.3 240.7,42.5 241.6,44.0 242.5,45.8 243.5,47.8 244.5,50.1 245.5,52.6 246.5,55.2 247.5,58.0 248.6,60.7 249.6,63.5 250.6,66.3 251.6,69.3 252.6,72.4 253.6,75.6 254.6,78.8 255.6,81.9 256.6,85.0 257.6,88.0 258.6,91.0 259.7,94.1 260.8,97.2 261.9,100.2 262.9,103.1 263.9,105.8 264.8,108.1 265.6,110.0 266.2,111.6 266.8,112.9 267.2,114.0 267.6,114.9 267.9,115.4 268.3,115.6 268.7,115.5 269.2,115.0 269.7,114.0 270.3,112.6 270.9,110.8 271.5,108.7 272.2,106.3 272.8,103.9 273.5,101.4 274.2,99.0 274.8,96.5 275.5,93.8 276.3,91.0 277.0,88.2 277.7,85.3 278.4,82.5 279.0,79.9 279.7,77.5 280.2,75.3 280.8,73.3 281.3,71.4 281.8,69.5 282.3,67.8 282.7,66.1 283.2,64.5 283.7,63.0 284.1,61.5 284.5,60.2 284.8,58.9 285.2,57.7 285.6,56.5 286.0,55.4 286.5,54.2 287.2,53.0 287.9,51.8 288.8,50.5 289.7,49.2 290.7,48.0 291.7,46.7 292.7,45.6 293.7,44.5 294.7,43.5 295.6,42.5 296.5,41.6 297.3,40.6 298.2,39.8 299.1,39.0 300.0,38.5 300.8,38.1 301.7,38.0 302.5,38.1 303.3,38.4 304.1,38.8 304.8,39.4 305.6,40.3 306.4,41.3 307.3,42.5 308.2,44.0 309.1,45.8 310.1,47.8 311.1,50.1 312.1,52.6 313.1,55.2 314.1,58.0 315.1,60.7 316.2,63.5 317.2,66.3 318.2,69.3 319.2,72.4 320.2,75.6 321.2,78.8 322.2,81.9 323.2,85.0 324.2,88.0 325.2,91.0 326.3,94.1 327.4,97.2 328.4,100.2 329.5,103.1 330.5,105.8 331.4,108.1 332.2,110.0 332.8,111.6 333.3,112.9 333.8,114.0 334.1,114.9 334.5,115.4 334.8,115.6 335.3,115.5 335.7,115.0 336.3,114.0 336.9,112.6 337.5,110.8 338.1,108.7 338.8,106.3 339.4,103.9 340.1,101.4 340.7,99.0 341.4,96.5 342.1,93.8 342.8,91.0 343.6,88.2 344.3,85.3 345.0,82.5 345.6,79.9 346.2,77.5 346.8,75.3 347.4,73.3 347.9,71.4 348.4,69.5 348.8,67.8 349.3,66.1 349.8,64.5 350.2,63.0 350.7,61.5 351.1,60.2 351.4,58.9 351.8,57.7 352.2,56.5 352.6,55.4 353.1,54.2 353.7,53.0 354.5,51.8 355.3,50.5 356.3,49.2 357.3,48.0 358.3,46.7 359.3,45.6 360.3,44.5 361.2,43.5 362.1,42.5 363.0,41.6 363.9,40.6 364.8,39.8 365.7,39.0 366.5,38.5 367.4,38.1 368.2,38.0 369.1,38.1 369.9,38.4 370.6,38.8 371.4,39.4 372.2,40.3 373.0,41.3 373.9,42.5 374.7,44.0 375.7,45.8 376.6,47.8 377.6,50.1 378.6,52.6 379.7,55.2 380.7,58.0 381.7,60.7 382.7,63.5 383.7,66.3 384.7,69.3 385.7,72.4 386.7,75.6 387.7,78.8 388.7,81.9 389.7,85.0 390.7,88.0 391.8,91.0 392.8,94.1 393.9,97.2 395.0,100.2 396.1,103.1 397.1,105.8 398.0,108.1 398.7,110.0 399.4,111.6 399.9,112.9 400.3,114.0 400.7,114.9 401.1,115.4 401.4,115.6 401.8,115.5 402.3,115.0 402.9,114.0 403.5,112.6 404.1,110.8 404.7,108.7 405.3,106.3 406.0,103.9 406.7,101.4 407.3,99.0 408.0,96.5 408.7,93.8 409.4,91.0 410.1,88.2 410.8,85.3 411.5,82.5 412.2,79.9 412.8,77.5 413.4,75.3 413.9,73.3 414.5,71.4 414.9,69.5 415.4,67.8 415.9,66.1 416.4,64.5 416.8,63.0 417.3,61.5 417.6,60.2 418.0,58.9 418.4,57.7 418.7,56.5 419.2,55.4 419.7,54.2 420.3,53.0 421.1,51.8 421.9,50.5 422.9,49.2 423.9,48.0 424.9,46.7 425.9,45.6 426.9,44.5 427.8,43.5 428.7,42.5 429.6,41.6 430.5,40.6 431.4,39.8 432.3,39.0 433.1,38.5 434.0,38.1 434.8,38.0 435.6,38.1 436.4,38.4 437.2,38.8 438.0,39.4 438.8,40.3 439.6,41.3 440.4,42.5 441.3,44.0 442.2,45.8 443.2,47.8 444.2,50.1 445.2,52.6 446.3,55.2 447.3,58.0 448.3,60.7 449.3,63.5 450.3,66.3 451.3,69.3 452.3,72.4 453.3,75.6 454.3,78.8 455.3,81.9 456.3,85.0 457.3,88.0 458.4,91.0 459.4,94.1 460.5,97.2 461.6,100.2 462.6,103.1 463.6,105.8 464.5,108.1 465.3,110.0 466.0,111.6 466.5,112.9 466.9,114.0 467.3,114.9 467.6,115.4 468.0,115.6 468.4,115.5 468.9,115.0 469.5,114.0 470.0,112.6 470.6,110.8 471.3,108.7 471.9,106.3 472.6,103.9 473.2,101.4 473.9,99.0 474.6,96.5 475.3,93.8 476.0,91.0 476.7,88.2 477.4,85.3 478.1,82.5 478.8,79.9 479.4,77.5 480.0,75.3 480.5,73.3 481.0,71.4 481.5,69.5 482.0,67.8 482.5,66.1 482.9,64.5 483.4,63.0 483.8,61.5 484.2,60.2 484.6,58.9 484.9,57.7 485.3,56.5 485.8,55.4 486.3,54.2 486.9,53.0 487.6,51.8 488.5,50.5 489.4,49.2 490.4,48.0 491.4,46.7 492.5,45.6 493.5,44.5 494.4,43.5 495.3,42.5 496.2,41.6 497.1,40.6 498.0,39.8 498.8,39.0 499.7,38.5 500.6,38.1 501.4,38.0 502.2,38.1 503.0,38.4 503.8,38.8 504.6,39.4 505.4,40.3 506.2,41.3 507.0,42.5 507.9,44.0 508.8,45.8 509.8,47.8 510.8,50.1 511.8,52.6 512.8,55.2 513.9,58.0 514.9,60.7 515.9,63.5 516.9,66.3 517.9,69.3 518.9,72.4 519.9,75.6 520.9,78.8 521.9,81.9 522.9,85.0 523.9,88.0 524.9,91.0 526.0,94.1 527.1,97.2 528.2,100.2 529.2,103.1 530.2,105.8 531.1,108.1 531.9,110.0 532.5,111.6 533.1,112.9 533.5,114.0 533.9,114.9 534.2,115.4 534.6,115.6 535.0,115.5 535.5,115.0 536.0,114.0 536.6,112.6 537.2,110.8 537.9,108.7 538.5,106.3 539.2,103.9 539.8,101.4 540.5,99.0 541.2,96.5 541.9,93.8 542.6,91.0 543.3,88.2 544.0,85.3 544.7,82.5 545.4,79.9 546.0,77.5 546.6,75.3 547.1,73.3 547.6,71.4 548.1,69.5 548.6,67.8 549.1,66.1 549.5,64.5 550.0,63.0 550.4,61.5 550.8,60.2 551.2,58.9" stroke="#3cbe3c" stroke-width="1"/>
</g>
<rect x="60" y="219" width="508" height="221" fill="#5c6c7a"/>
<rect x="61" y="220" width="506" height="219" fill="#b4cde4"/>
<rect x="61" y="438" width="506" height="1" fill="#c4e4f4"/>
<rect x="60" y="439" width="508" height="1" fill="#305868"/>
<rect x="61" y="220" width="506" height="1" fill="#d6e4f0"/>
<rect x="61" y="221" width="506" height="18" fill="url(#tb2)"/>
<rect x="65" y="239" width="497" height="1" fill="#8c9cac"/>
<rect x="65" y="240" width="497" height="195" fill="#ffffff"/>
<rect x="64" y="240" width="1" height="195" fill="#8a8e94"/>
<text x="77.3" y="234.4" font-family="Liberation Sans" font-size="8.6" fill="#1c2236" stroke="#1c2236" stroke-width="0.15" textLength="54" lengthAdjust="spacingAndGlyphs">varying-load.asc</text>
<path d="M72.5 226 Q67 230.5 71 235.5" stroke="#1850c0" stroke-width="2" fill="none"/>
<rect x="498.0" y="225.5" width="19.5" height="11.5" rx="2" fill="#b4cce4" stroke="#7e98b4" stroke-width="1"/><rect x="503" y="230" width="10" height="3.5" rx="1.5" fill="#f8fafc" stroke="#5a6e82" stroke-width="0.8"/>
<rect x="520.0" y="225.5" width="20" height="11.5" rx="2" fill="#b4cce4" stroke="#7e98b4" stroke-width="1"/><rect x="525.5" y="227.5" width="9" height="8" rx="1" fill="#f8fafc" stroke="#4a5e72" stroke-width="1"/><rect x="527.5" y="230" width="5" height="3" fill="none" stroke="#4a5e72" stroke-width="1"/>
<rect x="541.5" y="225.5" width="21" height="12" rx="2" fill="#c8503e" stroke="#8a3a30" stroke-width="1"/>
<rect x="542" y="226" width="20" height="5" fill="#e0826e"/>
<path d="M548.5 228.5 L555.5 234.5 M555.5 228.5 L548.5 234.5" stroke="#6a3026" stroke-width="3.6" stroke-linecap="round"/><path d="M548.5 228.5 L555.5 234.5 M555.5 228.5 L548.5 234.5" stroke="#ffffff" stroke-width="2" stroke-linecap="round"/>
<rect x="233" y="284" width="88.5" height="147.5" fill="#fcf9bc" stroke="#84807e" stroke-width="1.2"/>
<path d="M158.8 264.4 H331.2 V298.5 H321.5" stroke="#6262cc" stroke-width="1.1" fill="none"/>
<path d="M193.4 298.8 H233" stroke="#6262cc" stroke-width="1.1" fill="none"/>
<path d="M321.5 328.2 H390.3 V416.6 H321.5" stroke="#6262cc" stroke-width="1.1" fill="none"/>
<path d="M321.5 357.3 H331.3 V371.8" stroke="#6262cc" stroke-width="1.1" fill="none"/>
<path d="M331.3 374.6 V393" stroke="#6262cc" stroke-width="1.1" fill="none"/>
<path d="M321.5 387.3 H355" stroke="#6262cc" stroke-width="1.1" fill="none"/>
<path d="M380.3 387.3 H444.4 V394.3" stroke="#6262cc" stroke-width="1.1" fill="none"/>
<path d="M409.9 387.3 V405.6" stroke="#6262cc" stroke-width="1.1" fill="none"/>
<path d="M409.9 408.6 V421" stroke="#6262cc" stroke-width="1.1" fill="none"/>
<path d="M444.4 413.3 V421" stroke="#6262cc" stroke-width="1.1" fill="none"/>
<path d="M233 357.5 H220" stroke="#6262cc" stroke-width="1.1" fill="none"/>
<path d="M216.5 357.5 H199" stroke="#6262cc" stroke-width="1.1" fill="none"/>
<path d="M233 387.6 H226.5" stroke="#6262cc" stroke-width="1.1" fill="none"/>
<path d="M199 387.6 H205.5" stroke="#6262cc" stroke-width="1.1" fill="none"/>
<path d="M233 416.7 H227.6" stroke="#6262cc" stroke-width="1.1" fill="none"/>
<path d="M228 328.1 H233" stroke="#6262cc" stroke-width="1.1" fill="none"/>
<circle cx="158.8" cy="281" r="9.8" fill="none" stroke="#6c6c90" stroke-width="1.2"/>
<path d="M158.8 264.4 V271.2 M158.8 290.8 V298" stroke="#6c6c90" stroke-width="1.2" fill="none"/>
<path d="M155.5 275.5 H162 M158.8 272.3 V278.8 M155.5 287.7 H162" stroke="#6c6c90" stroke-width="1.2" fill="none"/>
<path d="M153.3 298.2 H164.3 L158.8 304.2 Z" stroke="#6c6c90" stroke-width="1.2" fill="none"/>
<path d="M193.4 264.5 V270.6 L198.4 273.4 L188.8 278.8 L198.4 283.8 L188.8 288.8 L193.4 292 V298.8" stroke="#6c6c90" stroke-width="1.2" fill="none"/>
<path d="M193.4 298.8 V304.8 L198.4 307.6 L188.8 313 L198.4 318 L188.8 323 L193.4 326.2 V332.6" stroke="#6c6c90" stroke-width="1.2" fill="none"/>
<path d="M187.9 332.6 H198.9 L193.4 338.6 Z" stroke="#6c6c90" stroke-width="1.2" fill="none"/>
<path d="M216.6 353 V362 M219.6 353 V362" stroke="#6c6c90" stroke-width="1.2" fill="none"/>
<path d="M198.5 352.2 V362.8 L192.7 357.5 Z" stroke="#6c6c90" stroke-width="1.2" fill="none"/>
<path d="M205.5 387.6 L208 382.8 L212.7 392.2 L217.7 382.8 L222.6 392.2 L225.6 387.6 H226.5" stroke="#6c6c90" stroke-width="1.2" fill="none"/>
<path d="M198.8 382.3 V392.90000000000003 L193 387.6 Z" stroke="#6c6c90" stroke-width="1.2" fill="none"/>
<path d="M227.8 411.4 V422.0 L222 416.7 Z" stroke="#6c6c90" stroke-width="1.2" fill="none"/>
<path d="M326.4 371.8 H336.4 M326.4 374.6 H336.4" stroke="#6c6c90" stroke-width="1.2" fill="none"/>
<path d="M327.2 395.3 L326.4 393.6 H336 L336.8 391.8 M326.4 400.4 H336.2 L331.3 393.6 Z M331.3 400.4 V406.5" stroke="#6c6c90" stroke-width="1.2" fill="none"/>
<path d="M325.8 406.5 H336.8 L331.3 412.5 Z" stroke="#6c6c90" stroke-width="1.2" fill="none"/>
<path d="M355 387.3 C355.5 381, 366 381, 366 386.3 C366 391.2, 363 391.2, 363 387.3 C363.3 381, 373.6 381, 373.6 386.3 C373.6 391.2, 370.6 391.2, 370.6 387.3 C370.9 381, 380.3 381, 380.3 387.3" stroke="#6c6c90" stroke-width="1.2" fill="none"/>
<path d="M405 405.6 H414.8 M405 408.6 H414.8" stroke="#6c6c90" stroke-width="1.2" fill="none"/>
<path d="M404.4 421 H415.4 L409.9 427 Z" stroke="#6c6c90" stroke-width="1.2" fill="none"/>
<circle cx="444.4" cy="403.8" r="9.5" fill="none" stroke="#6c6c90" stroke-width="1.2"/>
<path d="M444.4 397 V410 M442.6 404.5 L444.4 407.5 L446.2 404.5" stroke="#6c6c90" stroke-width="1.2" fill="none"/>
<path d="M438.9 421 H449.9 L444.4 427 Z" stroke="#6c6c90" stroke-width="1.2" fill="none"/>
<circle cx="193.4" cy="264.5" r="1.7" fill="#1c1c8c"/>
<circle cx="193.4" cy="298.8" r="1.7" fill="#1c1c8c"/>
<circle cx="331.3" cy="387.3" r="1.7" fill="#1c1c8c"/>
<circle cx="390.3" cy="387.3" r="1.7" fill="#1c1c8c"/>
<circle cx="409.9" cy="387.3" r="1.7" fill="#1c1c8c"/>
<text x="154.6" y="263.1" text-anchor="start" font-family="Liberation Sans" font-weight="bold" font-size="7.4" fill="#1a1a1a" stroke="#1a1a1a" stroke-width="0.4" textLength="9" lengthAdjust="spacingAndGlyphs">IN</text>
<text x="166" y="272.0" text-anchor="start" font-family="Liberation Sans" font-weight="bold" font-size="7.4" fill="#1a1a1a" stroke="#1a1a1a" stroke-width="0.4" textLength="9" lengthAdjust="spacingAndGlyphs">V1</text>
<text x="166.2" y="296.6" text-anchor="start" font-family="Liberation Sans" font-weight="bold" font-size="7.4" fill="#1a1a1a" stroke="#1a1a1a" stroke-width="0.4" textLength="8" lengthAdjust="spacingAndGlyphs">24</text>
<text x="200" y="279.1" text-anchor="start" font-family="Liberation Sans" font-weight="bold" font-size="7.4" fill="#1a1a1a" stroke="#1a1a1a" stroke-width="0.4" textLength="8.7" lengthAdjust="spacingAndGlyphs">R6</text>
<text x="200" y="291.0" text-anchor="start" font-family="Liberation Sans" font-weight="bold" font-size="7.4" fill="#1a1a1a" stroke="#1a1a1a" stroke-width="0.4" textLength="18" lengthAdjust="spacingAndGlyphs">5Meg</text>
<text x="199.4" y="313.2" text-anchor="start" font-family="Liberation Sans" font-weight="bold" font-size="7.4" fill="#1a1a1a" stroke="#1a1a1a" stroke-width="0.4" textLength="9.2" lengthAdjust="spacingAndGlyphs">R5</text>
<text x="199.4" y="325.1" text-anchor="start" font-family="Liberation Sans" font-weight="bold" font-size="7.4" fill="#1a1a1a" stroke="#1a1a1a" stroke-width="0.4" textLength="18.8" lengthAdjust="spacingAndGlyphs">1Meg</text>
<text x="212.6" y="350.9" text-anchor="start" font-family="Liberation Sans" font-weight="bold" font-size="7.4" fill="#1a1a1a" stroke="#1a1a1a" stroke-width="0.4" textLength="9.5" lengthAdjust="spacingAndGlyphs">C3</text>
<text x="207.8" y="368.6" text-anchor="start" font-family="Liberation Sans" font-weight="bold" font-size="7.4" fill="#1a1a1a" stroke="#1a1a1a" stroke-width="0.4" textLength="20.7" lengthAdjust="spacingAndGlyphs">.001μ</text>
<text x="210" y="380.6" text-anchor="start" font-family="Liberation Sans" font-weight="bold" font-size="7.4" fill="#1a1a1a" stroke="#1a1a1a" stroke-width="0.4" textLength="9" lengthAdjust="spacingAndGlyphs">R1</text>
<text x="205" y="398.6" text-anchor="start" font-family="Liberation Sans" font-weight="bold" font-size="7.4" fill="#1a1a1a" stroke="#1a1a1a" stroke-width="0.4" textLength="20" lengthAdjust="spacingAndGlyphs">49.9K</text>
<text x="235.5" y="301.2" text-anchor="start" font-family="Liberation Sans" font-weight="bold" font-size="7.4" fill="#1a1a1a" stroke="#1a1a1a" stroke-width="0.4" textLength="10" lengthAdjust="spacingAndGlyphs">EN</text>
<text x="235.3" y="330.7" text-anchor="start" font-family="Liberation Sans" font-weight="bold" font-size="7.4" fill="#1a1a1a" stroke="#1a1a1a" stroke-width="0.4" textLength="9.1" lengthAdjust="spacingAndGlyphs">PG</text>
<text x="235.3" y="360.8" text-anchor="start" font-family="Liberation Sans" font-weight="bold" font-size="7.4" fill="#1a1a1a" stroke="#1a1a1a" stroke-width="0.4" textLength="8.3" lengthAdjust="spacingAndGlyphs">SS</text>
<text x="235.5" y="391.6" text-anchor="start" font-family="Liberation Sans" font-weight="bold" font-size="7.4" fill="#1a1a1a" stroke="#1a1a1a" stroke-width="0.4" textLength="7.2" lengthAdjust="spacingAndGlyphs">Rt</text>
<text x="235.5" y="420.6" text-anchor="start" font-family="Liberation Sans" font-weight="bold" font-size="7.4" fill="#1a1a1a" stroke="#1a1a1a" stroke-width="0.4" textLength="15" lengthAdjust="spacingAndGlyphs">GND</text>
<text x="308.2" y="301.2" text-anchor="start" font-family="Liberation Sans" font-weight="bold" font-size="7.4" fill="#1a1a1a" stroke="#1a1a1a" stroke-width="0.4" textLength="10.8" lengthAdjust="spacingAndGlyphs">Vin</text>
<text x="309" y="330.7" text-anchor="start" font-family="Liberation Sans" font-weight="bold" font-size="7.4" fill="#1a1a1a" stroke="#1a1a1a" stroke-width="0.4" textLength="10" lengthAdjust="spacingAndGlyphs">BD</text>
<text x="298.7" y="360.8" text-anchor="start" font-family="Liberation Sans" font-weight="bold" font-size="7.4" fill="#1a1a1a" stroke="#1a1a1a" stroke-width="0.4" textLength="20" lengthAdjust="spacingAndGlyphs">Boost</text>
<text x="307.6" y="391.1" text-anchor="start" font-family="Liberation Sans" font-weight="bold" font-size="7.4" fill="#1a1a1a" stroke="#1a1a1a" stroke-width="0.4" textLength="11.2" lengthAdjust="spacingAndGlyphs">SW</text>
<text x="302.4" y="420.6" text-anchor="start" font-family="Liberation Sans" font-weight="bold" font-size="7.4" fill="#1a1a1a" stroke="#1a1a1a" stroke-width="0.4" textLength="16.4" lengthAdjust="spacingAndGlyphs">Vout</text>
<text x="272.7" y="316.1" text-anchor="start" font-family="Liberation Sans" font-weight="bold" font-size="7.4" fill="#1a1a1a" stroke="#1a1a1a" stroke-width="0.4" textLength="8.6" lengthAdjust="spacingAndGlyphs">U1</text>
<text x="260" y="404.8" text-anchor="start" font-family="Liberation Sans" font-weight="bold" font-size="7.4" fill="#1a1a1a" stroke="#1a1a1a" stroke-width="0.4" textLength="34" lengthAdjust="spacingAndGlyphs">LT3971-5</text>
<path d="M272.6 353 L275.6 353 L272.6 360.3 L277.6 360.3 L276.7 362.5 L268.4 362.5 Z M276.2 352.5 L287.4 352.5 L286.5 354.7 L284.6 354.7 L281.2 362.5 L278.8 362.5 L281.2 354.7 L275.3 354.7 Z" fill="#dc1414"/>
<text x="334.5" y="358.8" text-anchor="start" font-family="Liberation Sans" font-weight="bold" font-size="7.4" fill="#1a1a1a" stroke="#1a1a1a" stroke-width="0.4" textLength="9.1" lengthAdjust="spacingAndGlyphs">C2</text>
<text x="333.6" y="369.6" text-anchor="start" font-family="Liberation Sans" font-weight="bold" font-size="7.4" fill="#1a1a1a" stroke="#1a1a1a" stroke-width="0.4" textLength="15.4" lengthAdjust="spacingAndGlyphs">.47μ</text>
<text x="363.6" y="380.8" text-anchor="start" font-family="Liberation Sans" font-weight="bold" font-size="7.4" fill="#1a1a1a" stroke="#1a1a1a" stroke-width="0.4" textLength="8.2" lengthAdjust="spacingAndGlyphs">L1</text>
<text x="360" y="397.6" text-anchor="start" font-family="Liberation Sans" font-weight="bold" font-size="7.4" fill="#1a1a1a" stroke="#1a1a1a" stroke-width="0.4" textLength="14.5" lengthAdjust="spacingAndGlyphs">4.7μ</text>
<text x="337.4" y="406.0" text-anchor="start" font-family="Liberation Sans" font-weight="bold" font-size="7.4" fill="#1a1a1a" stroke="#1a1a1a" stroke-width="0.4" textLength="8.6" lengthAdjust="spacingAndGlyphs">D1</text>
<text x="336.6" y="414.2" text-anchor="start" font-family="Liberation Sans" font-weight="bold" font-size="7.4" fill="#1a1a1a" stroke="#1a1a1a" stroke-width="0.4" textLength="40.5" lengthAdjust="spacingAndGlyphs">RB060M-30</text>
<text x="426.7" y="385.4" text-anchor="start" font-family="Liberation Sans" font-weight="bold" font-size="7.4" fill="#1a1a1a" stroke="#1a1a1a" stroke-width="0.4" textLength="14.3" lengthAdjust="spacingAndGlyphs">OUT</text>
<text x="412.8" y="402.0" text-anchor="start" font-family="Liberation Sans" font-weight="bold" font-size="7.4" fill="#1a1a1a" stroke="#1a1a1a" stroke-width="0.4" textLength="8.2" lengthAdjust="spacingAndGlyphs">C1</text>
<text x="412.8" y="416.7" text-anchor="start" font-family="Liberation Sans" font-weight="bold" font-size="7.4" fill="#1a1a1a" stroke="#1a1a1a" stroke-width="0.4" textLength="12.9" lengthAdjust="spacingAndGlyphs">22μ</text>
<text x="452.4" y="394.9" text-anchor="start" font-family="Liberation Sans" font-weight="bold" font-size="7.4" fill="#1a1a1a" stroke="#1a1a1a" stroke-width="0.4" textLength="6.1" lengthAdjust="spacingAndGlyphs">I1</text>
<text x="452.4" y="419.8" text-anchor="start" font-family="Liberation Sans" font-weight="bold" font-size="7.4" fill="#1a1a1a" stroke="#1a1a1a" stroke-width="0.4" textLength="25.6" lengthAdjust="spacingAndGlyphs">{Iload}</text>
<text x="345.6" y="271.8" text-anchor="start" font-family="Liberation Sans" font-weight="bold" font-size="7.4" fill="#1a1a1a" stroke="#1a1a1a" stroke-width="0.4" textLength="82.8" lengthAdjust="spacingAndGlyphs">.tran 0 2.2m 2m startup</text>
<text x="345.6" y="286.3" text-anchor="start" font-family="Liberation Sans" font-weight="bold" font-size="7.4" fill="#1a1a1a" stroke="#1a1a1a" stroke-width="0.4" textLength="102.2" lengthAdjust="spacingAndGlyphs">.step param Iload 0.25 1 0.25</text>
</svg>
</body></html>
